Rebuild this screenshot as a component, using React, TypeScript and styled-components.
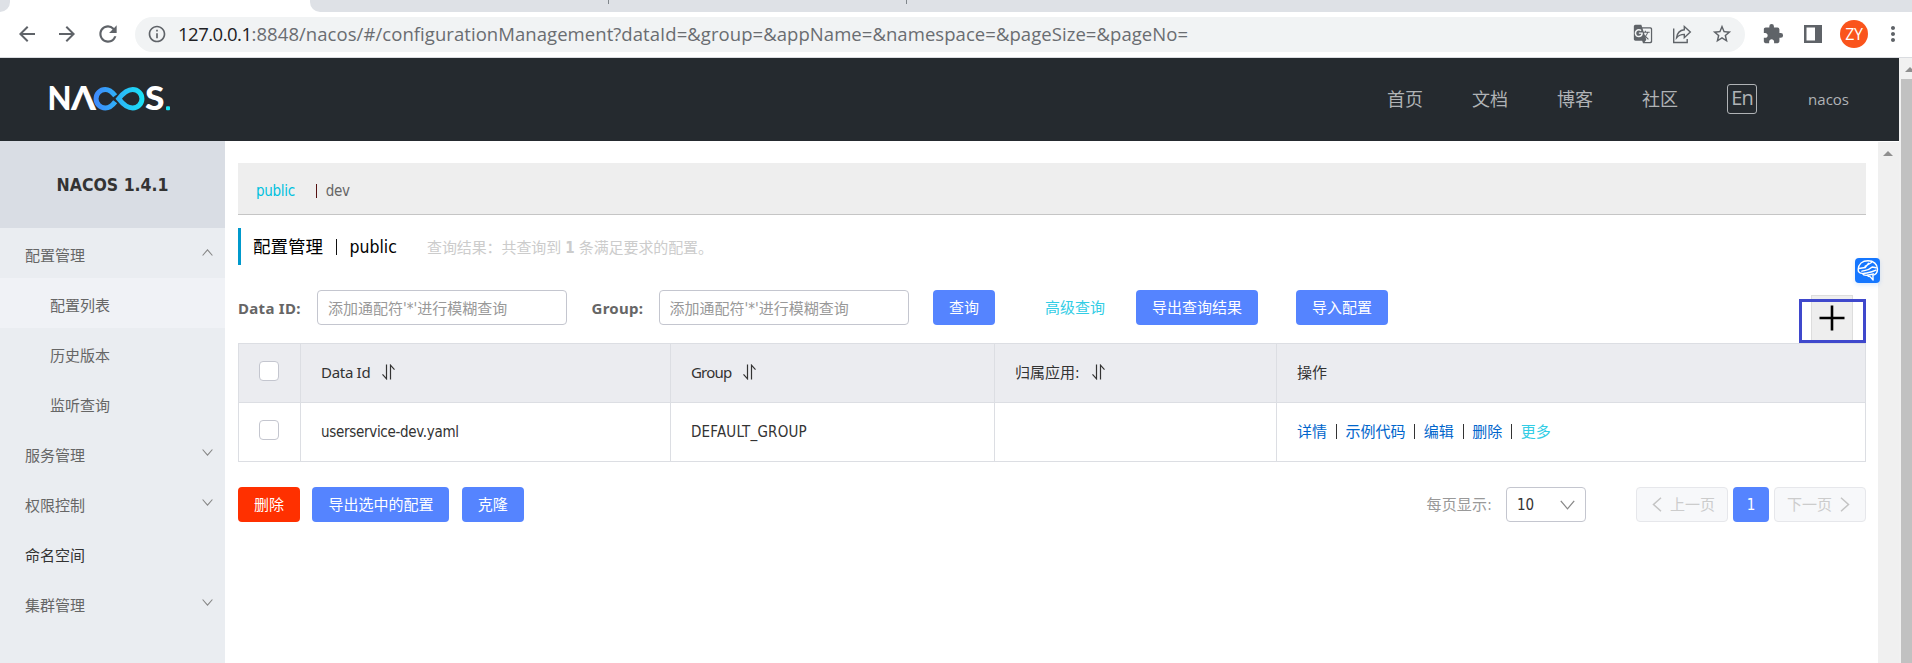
import React from "react";
import styled, { createGlobalStyle, css } from "styled-components";
import {
  MdArrowBack,
  MdArrowForward,
  MdExtension,
  MdGTranslate,
  MdInfoOutline,
  MdMoreVert,
  MdRefresh,
  MdStarBorder,
} from "react-icons/md";

const ui = `"DejaVu Sans Condensed", "Noto Sans CJK SC", sans-serif`;
const serifI = `"Noto Sans", "Noto Sans CJK SC", sans-serif`;
const segoe = `"Open Sans", "Noto Sans CJK SC", sans-serif`;

const GlobalStyle = createGlobalStyle`
  *, *::before, *::after { box-sizing: border-box; }
  body { margin: 0; overflow: hidden; background: #fff; font: 15px/20px ${ui}; color: #333; }
  svg { display: block; flex: none; }
  button, input { font: inherit; }
`;

const Window = styled.div`
  display: flex;
  flex-direction: column;
  width: 1912px;
  height: 663px;
  overflow: hidden;
`;

/* Browser chrome */
const TabStrip = styled.div`
  display: flex;
  height: 12px;
  background: #fff;
`;
const TabBefore = styled.div`
  width: 10px;
  background: #dee1e6;
  border-bottom-right-radius: 10px;
`;
const ActiveTab = styled.div`
  width: 300px;
`;
const TabsAfter = styled.div`
  flex: 1;
  display: flex;
  gap: 297px;
  padding-left: 298px;
  background: #dee1e6;
  border-bottom-left-radius: 10px;
`;
const TabDivider = styled.i`
  width: 1px;
  height: 4px;
  background: #80868b;
`;
const Toolbar = styled.div`
  display: flex;
  align-items: center;
  height: 46px;
  padding: 0 7px 1px 15px;
  border-bottom: 1px solid #dadce0;
  color: #5f6368;
`;
const NavButtons = styled.div`
  display: flex;
  flex: none;
  align-items: center;
  gap: 16px;
  width: 120px;
`;
const AddressBar = styled.div`
  display: flex;
  flex: none;
  align-items: center;
  width: 1610px;
  height: 35px;
  padding: 0 12px 0 12px;
  border-radius: 18px;
  background: #f1f3f4;
`;
const Url = styled.div`
  flex: 1;
  margin-left: 11px;
  font: 18.5px/24px ${segoe};
  letter-spacing: 0.06px;
  white-space: nowrap;
  color: #6a6d71;
`;
const Host = styled.span`
  color: #202124;
  letter-spacing: -0.5px;
`;
const AddressActions = styled.div`
  display: flex;
  align-items: center;
  gap: 19px;
`;
const BrowserActions = styled.div`
  display: flex;
  align-items: center;
  margin-left: 17px;
`;
const Avatar = styled.div`
  width: 28px;
  height: 28px;
  margin: 0 13px 0 18px;
  border-radius: 50%;
  background: #fa541c;
  color: #fff;
  text-align: center;
  font: 16px/28px ${segoe};
  letter-spacing: -0.3px;
`;

/* Page frame */
const Viewport = styled.div`
  flex: 1;
  display: flex;
  min-height: 0;
`;
const Page = styled.div`
  display: flex;
  flex-direction: column;
  width: 1899px;
`;
const PageScrollbar = styled.div`
  width: 13px;
  display: flex;
  flex-direction: column;
  align-items: flex-end;
  background: #f1f1f1;
`;
const ScrollUp = styled.div`
  height: 21px;
  padding-top: 9px;
`;
const ScrollThumb = styled.div`
  flex: 1;
  width: 11px;
  background: #c1c1c1;
`;
const Header = styled.header`
  display: flex;
  align-items: center;
  justify-content: space-between;
  height: 83px;
  padding: 0 50px 2px 45px;
  background: #252a2f;
`;
const HeaderNav = styled.nav`
  display: flex;
  align-items: center;
  gap: 49px;
  color: #b0b3b6;
  font: 18px/26px ${segoe};
`;
const LangSwitch = styled.span`
  width: 30px;
  height: 30px;
  border: 1px solid #b0b3b6;
  border-radius: 3px;
  text-align: center;
  font: 20px/26px ${segoe};
  letter-spacing: -0.8px;
`;
const UserName = styled.span`
  margin-left: 2px;
  font-size: 15px;
`;

const Body = styled.div`
  flex: 1;
  display: flex;
  min-height: 0;
`;
const Sidebar = styled.aside`
  width: 225px;
  background: #eaedf1;
`;
const SidebarTitle = styled.div`
  height: 87px;
  padding-top: 2px;
  background: #d9dde4;
  font: bold 17.5px/84px ${ui};
  text-align: center;
`;
const MenuItem = styled.div<{ $sub?: boolean; $active?: boolean; $dark?: boolean }>`
  display: flex;
  align-items: center;
  justify-content: space-between;
  height: 50px;
  padding: 5px 12px 0 ${(p) => (p.$sub ? 50 : 25)}px;
  background: ${(p) => (p.$active ? "#f0f2f6" : "transparent")};
  color: ${(p) => (p.$dark ? "#333" : "#666")};
`;
const MenuChevron = styled.svg`
  margin-top: -6px;
`;

const Main = styled.main`
  flex: 1;
  padding: 22px 12px 0 13px;
`;
const InnerScrollbar = styled.div`
  width: 21px;
  margin-top: 1px;
  padding: 9px 0 0 5px;
  background: #f0f0f0;
`;

const NamespaceBar = styled.div`
  display: flex;
  align-items: center;
  height: 52px;
  padding: 4px 0 0 18px;
  border-bottom: 1px solid #c5c5c5;
  background: #eee;
`;
const Namespace = styled.span<{ $current?: boolean }>`
  color: ${(p) => (p.$current ? "#00c1de" : "#666")};
  letter-spacing: -0.3px;
`;
const NamespaceSeparator = styled.i`
  width: 1px;
  height: 14px;
  margin: 0 9px 0 21px;
  background: #511;
`;
const TitleRow = styled.div`
  display: flex;
  align-items: center;
  height: 37px;
  margin-top: 13px;
  padding-left: 12px;
  border-left: 3px solid #09c;
`;
const Title = styled.h1`
  display: flex;
  align-items: center;
  width: 174px;
  margin: 0;
  font: 17.5px/24px ${ui};
  color: #000;
`;
const TitleSeparator = styled.i`
  width: 1px;
  height: 16px;
  margin: 0 12.5px 0 13px;
  background: #111;
`;
const ResultSummary = styled.p`
  margin: 2px 0 0;
  color: #ccc;
  letter-spacing: -0.1px;
`;

const QueryForm = styled.form`
  display: flex;
  align-items: center;
  height: 35px;
  margin-top: 25px;
`;
const Label = styled.label<{ $w: number }>`
  width: ${(p) => p.$w}px;
  font: bold 15px/20px ${serifI};
  letter-spacing: 0.3px;
  color: #666;
`;
const TextInput = styled.input`
  width: 250px;
  height: 35px;
  margin-right: 24.5px;
  padding: 2px 10px 0;
  border: 1px solid #c4c6cf;
  border-radius: 4px;
  background: #fff;
  &::placeholder { color: #999; opacity: 1; }
`;
const Button = styled.button<{ $w: number; $warning?: boolean }>`
  width: ${(p) => p.$w}px;
  height: 35px;
  padding: 0;
  border: 0;
  border-radius: 4px;
  background: ${(p) => (p.$warning ? "#ff3000" : "#5584ff")};
  color: #fff;
`;
const ImportButton = styled(Button)`
  margin-left: 38px;
`;
const AdvancedLink = styled.a`
  margin: 0 31px 0 50px;
  color: #33cde5;
`;
const AddHolder = styled.div`
  position: relative;
  align-self: stretch;
  width: 67px;
  margin-left: auto;
`;
const AddButton = styled.div`
  position: absolute;
  left: 12px;
  top: 5px;
  width: 42px;
  height: 46px;
  border: 1px solid #ddd;
  background: #eee;
  display: flex;
  justify-content: center;
  padding-top: 9px;
`;
const Highlight = styled.div`
  position: absolute;
  left: 0;
  top: 9px;
  z-index: 1;
  width: 67px;
  height: 44px;
  border: 3px solid #3f48cc;
`;
const Assistant = styled.div`
  position: absolute;
  left: 1855px;
  top: 258px;
  width: 25px;
  height: 25px;
  border-radius: 4px;
  background: #1677ff;
  box-shadow: 0 2px 4px rgba(22, 119, 255, 0.15);
`;

const Table = styled.div`
  margin-top: 18px;
  border: 1px solid #dcdee3;
`;
const TableRow = styled.div<{ $head?: boolean }>`
  display: grid;
  grid-template-columns: 62px 370px 324px 282px 1fr;
  height: ${(p) => (p.$head ? 59 : 58)}px;
  ${(p) =>
    p.$head &&
    css`
      background: #ebecf0;
      border-bottom: 1px solid #dcdee3;
    `}
`;
const Cell = styled.div`
  display: flex;
  align-items: center;
  padding: 0 20px 1px;
  border-right: 1px solid #dcdee3;
  white-space: nowrap;
  &:last-child { border-right: 0; }
`;
const HeadText = styled.span<{ $tight?: number; $latin?: boolean }>`
  margin-top: ${(p) => (p.$latin ? -1 : 0)}px;
  font-family: ${(p) => (p.$latin ? serifI : ui)};
  letter-spacing: ${(p) => -(p.$tight ?? 0)}px;
`;
const Value = styled.span<{ $spacing: number }>`
  letter-spacing: ${(p) => p.$spacing}px;
`;
const SortSvg = styled.svg`
  margin: -1px 0 0 11px;
`;
const Checkbox = styled.span`
  width: 20px;
  height: 20px;
  margin-top: -3px;
  border: 1px solid #c4c6cf;
  border-radius: 4px;
  background: #fff;
`;
const RowActions = styled.div`
  display: flex;
  align-items: center;
`;
const RowLink = styled.a<{ $more?: boolean }>`
  color: ${(p) => (p.$more ? "#33cde5" : "#06c")};
`;
const LinkSeparator = styled.i`
  width: 1px;
  height: 15px;
  margin: 0 8.6px 0 8.8px;
  background: #333;
`;

const Footer = styled.div`
  display: flex;
  align-items: center;
  justify-content: space-between;
  margin-top: 25px;
`;
const BatchActions = styled.div`
  display: flex;
  gap: 12.4px;
`;
const Pagination = styled.div`
  display: flex;
  align-items: center;
`;
const PageSizeLabel = styled.span`
  color: #999;
  margin-right: 14px;
  letter-spacing: 0.2px;
`;
const PageSizeSelect = styled.div`
  display: flex;
  align-items: center;
  justify-content: space-between;
  width: 80px;
  height: 35px;
  margin-right: 50px;
  padding: 0 10px 0 10px;
  border: 1px solid #c4c6cf;
  border-radius: 4px;
`;
const PageStep = styled.button<{ $next?: boolean }>`
  display: flex;
  align-items: center;
  justify-content: ${(p) => (p.$next ? "flex-start" : "flex-end")};
  gap: 8px;
  width: 92px;
  height: 35px;
  padding: 0 12px;
  border: 1px solid #e6e7eb;
  border-radius: 4px;
  background: #f7f8fa;
  color: #ccc;
`;
const CurrentPage = styled.span`
  width: 36px;
  height: 35px;
  margin: 0 5px;
  border-radius: 4px;
  background: #5584ff;
  color: #fff;
  line-height: 37px;
  text-align: center;
`;

const Chevron = ({ up }: { up?: boolean }) => (
  <MenuChevron width="11" height="7" viewBox="0 0 11 7" fill="none" stroke="#888" strokeWidth="1.1">
    <path d={up ? "M.6 6.5 5.5.8l4.9 5.7" : "M.6.5l4.9 5.7L10.4.5"} />
  </MenuChevron>
);

const SortIcon = () => (
  <SortSvg width="15" height="16" viewBox="0 0 15 16" fill="none" stroke="#333" strokeWidth="1.2">
    <path d="M5.5.5v14.3L1.5 10.4M9.5 15.5V1.2l4 4.4" />
  </SortSvg>
);

const UpArrow = ({ width }: { width: number }) => (
  <svg width={width} height="5" viewBox={`0 0 ${width} 5`}>
    <path d="M5 0l5 5H0z" fill="#8f8f8f" />
  </svg>
);

const Logo = () => (
  <svg width="134" height="48" viewBox="-4 -10 134 48">
    <defs>
      <linearGradient id="loop" gradientUnits="userSpaceOnUse" x1="45" y1="0" x2="96" y2="0">
        <stop offset="0" stopColor="#4088fb" />
        <stop offset="1" stopColor="#18e4f5" />
      </linearGradient>
    </defs>
    <g fill="#fff" fontFamily="Lato, sans-serif" fontWeight="900" fontSize="31.5">
      <text x="-1.5" y="25" textLength="24" lengthAdjust="spacingAndGlyphs">N</text>
      <text x="22" y="25" textLength="25" lengthAdjust="spacingAndGlyphs">Λ</text>
      <text x="96" y="25" textLength="19.5" lengthAdjust="spacingAndGlyphs">S</text>
    </g>
    <g fill="none" stroke="url(#loop)" strokeWidth="5">
      <path d="M66.200 10.800C63 6.700 60 4.500 56.300 4.500a9.200 9.200 0 0 0 0 18.500c3.700 0 6.700-2 9.900-6.300" />
      <path d="M69.700 13.700C75 7 79 4.500 83.700 4.500a9.200 9.200 0 0 1 0 18.500C79 23 75 20.500 69.700 13.700z" />
    </g>
    <rect x="117" y="21.200" width="4" height="4" rx="1" fill="#18e4f5" />
  </svg>
);

const ShareIcon = () => (
  <svg width="20" height="20" viewBox="0 0 20 20" fill="none" stroke="#5f6368" strokeWidth="1.4">
    <path d="M1.700 4.500v14h13.500v-3.500" />
    <path d="M12.300 2.500l6 5.600-6 5.600v-3.300c-3.500 0-5.800.9-7.700 3.300.6-4.600 3.200-7.400 7.700-7.900z" />
  </svg>
);

const SidePanelSvg = styled.svg`
  margin-left: 20px;
`;
const SidePanelIcon = () => (
  <SidePanelSvg width="18" height="18" viewBox="0 0 18 18">
    <path d="M0 0h18v18H0zM2.500 2.500v13h8.500v-13z" fill="#5f6368" fillRule="evenodd" />
  </SidePanelSvg>
);

const BrainIcon = () => (
  <svg width="25" height="25" viewBox="0 0 25 25" fill="none" stroke="#fff" strokeWidth="1.400" strokeLinecap="round" strokeLinejoin="round">
    <path d="M3.200 11.500C3.500 6 7.500 2.800 13 2.800c5.500 0 9.500 3.400 9.500 8.200 0 3.200-1.600 5.500-4.600 6.400l.2 4.600-3-3.400c-1.300 0-2.200-.5-2.800-1.300-2.400.3-4.100-.2-5-1.900-2.700-.2-4.300-1.500-4.100-3.900z" />
    <path d="M4 10.500l6.200-1 3.200-4.200M7 13.200c3.400-1 7-.9 10.200-4.200l4 .8M10 8.300l6.500-3.800M8.500 15.500c4.500-.9 7.500-.7 12.500-3.300M12.500 17.200l6-1.200" />
  </svg>
);

const operations = ["详情", "示例代码", "编辑", "删除"];

export default function App() {
  return (
    <Window>
      <GlobalStyle />
      <TabStrip>
        <TabBefore />
        <ActiveTab />
        <TabsAfter>
          <TabDivider />
          <TabDivider />
        </TabsAfter>
      </TabStrip>
      <Toolbar>
        <NavButtons>
          <MdArrowBack size={24} />
          <MdArrowForward size={24} />
          <MdRefresh size={26} />
        </NavButtons>
        <AddressBar>
          <MdInfoOutline size={20} />
          <Url>
            <Host>127.0.0.1</Host>:8848/nacos/#/configurationManagement?dataId=&amp;group=&amp;appName=&amp;namespace=&amp;pageSize=&amp;pageNo=
          </Url>
          <AddressActions>
            <MdGTranslate size={20} />
            <ShareIcon />
            <MdStarBorder size={22} />
          </AddressActions>
        </AddressBar>
        <BrowserActions>
          <MdExtension size={22} />
          <SidePanelIcon />
          <Avatar>ZY</Avatar>
          <MdMoreVert size={24} />
        </BrowserActions>
      </Toolbar>
      <Viewport>
        <Page>
          <Header>
            <Logo />
            <HeaderNav>
              <span>首页</span>
              <span>文档</span>
              <span>博客</span>
              <span>社区</span>
              <LangSwitch>En</LangSwitch>
              <UserName>nacos</UserName>
            </HeaderNav>
          </Header>
          <Body>
            <Sidebar>
              <SidebarTitle>NACOS 1.4.1</SidebarTitle>
              <MenuItem>配置管理<Chevron up /></MenuItem>
              <MenuItem $sub $active>配置列表</MenuItem>
              <MenuItem $sub>历史版本</MenuItem>
              <MenuItem $sub>监听查询</MenuItem>
              <MenuItem>服务管理<Chevron /></MenuItem>
              <MenuItem>权限控制<Chevron /></MenuItem>
              <MenuItem $dark>命名空间</MenuItem>
              <MenuItem>集群管理<Chevron /></MenuItem>
            </Sidebar>
            <Main>
              <NamespaceBar>
                <Namespace $current>public</Namespace>
                <NamespaceSeparator />
                <Namespace>dev</Namespace>
              </NamespaceBar>
              <TitleRow>
                <Title>
                  配置管理
                  <TitleSeparator />
                  public
                </Title>
                <ResultSummary>
                  查询结果：共查询到 <b>1</b> 条满足要求的配置。
                </ResultSummary>
              </TitleRow>
              <QueryForm>
                <Label $w={79}>Data ID:</Label>
                <TextInput placeholder="添加通配符'*'进行模糊查询" />
                <Label $w={67}>Group:</Label>
                <TextInput placeholder="添加通配符'*'进行模糊查询" />
                <Button type="button" $w={62}>查询</Button>
                <AdvancedLink>高级查询</AdvancedLink>
                <Button type="button" $w={122}>导出查询结果</Button>
                <ImportButton type="button" $w={92}>导入配置</ImportButton>
                <AddHolder>
                  <AddButton>
                    <svg width="26" height="26" viewBox="0 0 26 26" stroke="#000" strokeWidth="2.600">
                      <path d="M13 .5v25M.5 13h25" />
                    </svg>
                  </AddButton>
                  <Highlight />
                </AddHolder>
              </QueryForm>
              <Table>
                <TableRow $head>
                  <Cell><Checkbox /></Cell>
                  <Cell><HeadText $latin $tight={0.3}>Data Id</HeadText><SortIcon /></Cell>
                  <Cell><HeadText $latin $tight={0.8}>Group</HeadText><SortIcon /></Cell>
                  <Cell><HeadText>归属应用:</HeadText><SortIcon /></Cell>
                  <Cell><HeadText>操作</HeadText></Cell>
                </TableRow>
                <TableRow>
                  <Cell><Checkbox /></Cell>
                  <Cell><Value $spacing={-0.3}>userservice-dev.yaml</Value></Cell>
                  <Cell><Value $spacing={0.2}>DEFAULT_GROUP</Value></Cell>
                  <Cell />
                  <Cell>
                    <RowActions>
                      {operations.map((name) => (
                        <React.Fragment key={name}>
                          <RowLink>{name}</RowLink>
                          <LinkSeparator />
                        </React.Fragment>
                      ))}
                      <RowLink $more>更多</RowLink>
                    </RowActions>
                  </Cell>
                </TableRow>
              </Table>
              <Footer>
                <BatchActions>
                  <Button $w={62} $warning>删除</Button>
                  <Button $w={137}>导出选中的配置</Button>
                  <Button $w={62}>克隆</Button>
                </BatchActions>
                <Pagination>
                  <PageSizeLabel>每页显示:</PageSizeLabel>
                  <PageSizeSelect>
                    10
                    <svg width="15" height="10" viewBox="0 0 15 10" fill="none" stroke="#888" strokeWidth="1.300">
                      <path d="M.8.8l6.700 8 6.700-8" />
                    </svg>
                  </PageSizeSelect>
                  <PageStep>
                    <svg width="10" height="15" viewBox="0 0 10 15" fill="none" stroke="#c4c4c4" strokeWidth="1.500">
                      <path d="M9 .8L1.500 7.500 9 14.200" />
                    </svg>
                    上一页
                  </PageStep>
                  <CurrentPage>1</CurrentPage>
                  <PageStep $next>
                    下一页
                    <svg width="10" height="15" viewBox="0 0 10 15" fill="none" stroke="#c4c4c4" strokeWidth="1.500">
                      <path d="M1 .8l7.500 6.700L1 14.200" />
                    </svg>
                  </PageStep>
                </Pagination>
              </Footer>
            </Main>
            <InnerScrollbar>
              <UpArrow width={10} />
            </InnerScrollbar>
          </Body>
        </Page>
        <PageScrollbar>
          <ScrollUp><UpArrow width={7} /></ScrollUp>
          <ScrollThumb />
        </PageScrollbar>
      </Viewport>
      <Assistant><BrainIcon /></Assistant>
    </Window>
  );
}
